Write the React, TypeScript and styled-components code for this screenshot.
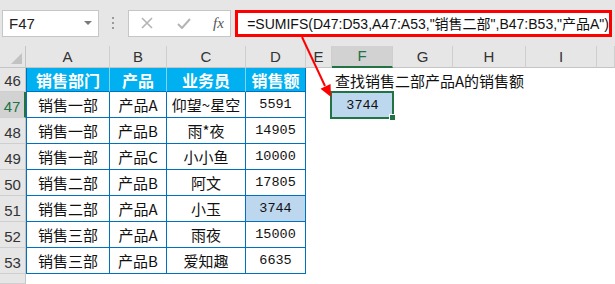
import styled, { createGlobalStyle } from "styled-components"

const Global = createGlobalStyle`
  html, body {
    margin: 0;
    padding: 0;
    background: #ffffff;
  }
  body {
    font-family: "Liberation Sans", "Noto Sans CJK SC", sans-serif;
  }
`

const BLUE = "#0070c0"
const GREEN = "#217346"

const Style = {
  Page: styled.div`
    position: relative;
    width: 615px;
    height: 284px;
    overflow: hidden;
    background: #ffffff;
  `,
  Toolbar: styled.div`
    height: 46px;
    background: #e6e6e6;
    display: flex;
    align-items: center;
    padding-left: 2px;
    box-sizing: border-box;
  `,
  NameBox: styled.div`
    width: 101px;
    height: 27px;
    box-sizing: border-box;
    background: #ffffff;
    border: 1px solid #c6c6c6;
    display: flex;
    align-items: center;
    justify-content: space-between;
    padding: 0 6px 0 6px;
    font-size: 15px;
    color: #222;
  `,
  DropArrow: styled.span`
    width: 0;
    height: 0;
    border-left: 4px solid transparent;
    border-right: 4px solid transparent;
    border-top: 4px solid #7a7a7a;
  `,
  Grip: styled.div`
    width: 31px;
    display: flex;
    flex-direction: column;
    align-items: center;
    gap: 3px;
    span {
      width: 2px;
      height: 2px;
      background: #9a9a9a;
    }
  `,
  FxButtons: styled.div`
    width: 108px;
    height: 27px;
    box-sizing: border-box;
    background: #ffffff;
    border: 1px solid #c6c6c6;
    display: flex;
    align-items: center;
    padding-left: 12px;
    gap: 24px;
  `,
  FxLabel: styled.span`
    font-family: "Liberation Serif", serif;
    font-style: italic;
    font-size: 15px;
    color: #555;
    margin-left: -2px;
  `,
  FormulaBox: styled.div`
    flex: 1;
    margin-left: 4px;
    margin-right: 3px;
    height: 27px;
    box-sizing: border-box;
    border: 3px solid #ff0000;
    background: #ffffff;
    display: flex;
    align-items: center;
    padding-left: 9px;
    font-size: 14px;
    color: #111;
    white-space: nowrap;
  `,
  Sheet: styled.div`
    display: grid;
    grid-template-columns: 26px 84px 57px 79px 60px 26px 61px 60px 73px 71px 1fr;
    grid-template-rows: 22px 24px repeat(7, 26px) 10px;
  `,
  Corner: styled.div`
    position: relative;
    background: #e6e6e6;
    border-right: 1px solid #c4c4c4;
    border-bottom: 1px solid #c4c4c4;
    box-sizing: border-box;
    &::after {
      content: "";
      position: absolute;
      right: 3px;
      bottom: 3px;
      border-left: 11px solid transparent;
      border-bottom: 11px solid #c2c2c2;
    }
  `,
  ColHead: styled.div<{ $active?: boolean }>`
    background: ${(p) => (p.$active ? "#d2d2d2" : "#e6e6e6")};
    border-right: 1px solid #cfcfcf;
    border-bottom: ${(p) => (p.$active ? `2px solid ${GREEN}` : "1px solid #c4c4c4")};
    box-sizing: border-box;
    display: flex;
    align-items: flex-end;
    justify-content: center;
    padding-bottom: 2px;
    font-size: 15px;
    color: ${(p) => (p.$active ? GREEN : "#333")};
  `,
  RowHead: styled.div<{ $active?: boolean }>`
    background: ${(p) => (p.$active ? "#d2d2d2" : "#e6e6e6")};
    border-bottom: 1px solid #cfcfcf;
    border-right: ${(p) => (p.$active ? `2px solid ${GREEN}` : "1px solid #c4c4c4")};
    box-sizing: border-box;
    display: flex;
    align-items: flex-end;
    justify-content: center;
    padding-bottom: 1px;
    font-size: 15px;
    line-height: 18px;
    color: ${(p) => (p.$active ? GREEN : "#333")};
  `,
  HeadCell: styled.div<{ $first?: boolean; $last?: boolean }>`
    background: #00b0f0;
    color: #ffffff;
    font-family: "Noto Sans CJK SC", sans-serif;
    font-weight: 700;
    font-size: 16px;
    display: flex;
    align-items: center;
    justify-content: center;
    box-sizing: border-box;
    border-left: ${(p) => (p.$first ? `1px solid ${BLUE}` : "none")};
    border-right: 1px solid ${(p) => (p.$last ? BLUE : "#7fd3f5")};
    border-bottom: 1px solid ${BLUE};
  `,
  BodyCell: styled.div<{ $first?: boolean; $fill?: string }>`
    background: ${(p) => p.$fill || "#ffffff"};
    color: #111;
    font-family: "Noto Sans CJK SC", sans-serif;
    font-size: 15px;
    display: flex;
    align-items: center;
    justify-content: center;
    box-sizing: border-box;
    border-left: ${(p) => (p.$first ? `1px solid ${BLUE}` : "none")};
    border-right: 1px solid ${BLUE};
    border-bottom: 1px solid ${BLUE};
  `,
  Num: styled.span`
    font-family: "Liberation Mono", monospace;
    font-size: 13.5px;
  `,
  Blank: styled.div<{ $fill?: string }>`
    position: relative;
    background: ${(p) => p.$fill || "transparent"};
    display: flex;
    align-items: center;
    justify-content: center;
    color: #111;
  `,
  Note: styled.div`
    position: relative;
    z-index: 1;
    display: flex;
    align-items: center;
    padding-left: 3px;
    white-space: nowrap;
    font-family: "Noto Sans CJK SC", sans-serif;
    font-size: 15px;
    color: #111;
  `,
  Selection: styled.div`
    position: absolute;
    left: -2px;
    top: -1px;
    right: -1px;
    bottom: -1px;
    border: 2px solid ${GREEN};
    pointer-events: none;
  `,
  Handle: styled.div`
    position: absolute;
    right: -4px;
    bottom: -4px;
    width: 5px;
    height: 5px;
    background: ${GREEN};
    border: 1px solid #ffffff;
  `,
  Arrow: styled.svg`
    position: absolute;
    left: 0;
    top: 0;
    pointer-events: none;
  `,
}

const COLS = ["A", "B", "C", "D", "E", "F", "G", "H", "I", ""]
const HEAD = ["销售部门", "产品", "业务员", "销售额"]
const ROWS = [
  ["销售一部", "产品A", "仰望~星空", "5591"],
  ["销售一部", "产品B", "雨*夜", "14905"],
  ["销售一部", "产品C", "小小鱼", "10000"],
  ["销售二部", "产品B", "阿文", "17805"],
  ["销售二部", "产品A", "小玉", "3744"],
  ["销售三部", "产品A", "雨夜", "15000"],
  ["销售三部", "产品B", "爱知趣", "6635"],
]

function XIcon() {
  return (
    <svg width="12" height="12" viewBox="0 0 12 12">
      <path d="M1 1 L11 11 M11 1 L1 11" stroke="#b4b4b4" strokeWidth="1.6" fill="none" />
    </svg>
  )
}

function CheckIcon() {
  return (
    <svg width="14" height="11" viewBox="0 0 14 11">
      <path d="M1 6 L5 10 L13 1" stroke="#b4b4b4" strokeWidth="2" fill="none" />
    </svg>
  )
}

export default function App() {
  return (
    <Style.Page>
      <Global />
      <Style.Toolbar>
        <Style.NameBox>
          F47
          <Style.DropArrow />
        </Style.NameBox>
        <Style.Grip>
          <span />
          <span />
          <span />
        </Style.Grip>
        <Style.FxButtons>
          <XIcon />
          <CheckIcon />
          <Style.FxLabel>fx</Style.FxLabel>
        </Style.FxButtons>
        <Style.FormulaBox>=SUMIFS(D47:D53,A47:A53,"销售二部",B47:B53,"产品A")</Style.FormulaBox>
      </Style.Toolbar>

      <Style.Sheet>
        <Style.Corner />
        {COLS.map((c, i) => (
          <Style.ColHead key={i} $active={c === "F"}>
            {c}
          </Style.ColHead>
        ))}

        <Style.RowHead>46</Style.RowHead>
        {HEAD.map((h, i) => (
          <Style.HeadCell key={h} $first={i === 0} $last={i === 3}>
            {h}
          </Style.HeadCell>
        ))}
        <Style.Blank />
        <Style.Note>查找销售二部产品A的销售额</Style.Note>
        <Style.Blank />
        <Style.Blank />
        <Style.Blank />
        <Style.Blank />

        {ROWS.map((r, ri) => {
          const rowNo = 47 + ri
          return [
            <Style.RowHead key={`h${ri}`} $active={rowNo === 47}>
              {rowNo}
            </Style.RowHead>,
            ...r.map((v, ci) => (
              <Style.BodyCell
                key={`c${ri}-${ci}`}
                $first={ci === 0}
                $fill={rowNo === 51 && ci === 3 ? "#bdd7ee" : undefined}
              >
                {ci === 3 ? <Style.Num>{v}</Style.Num> : v}
              </Style.BodyCell>
            )),
            <Style.Blank key={`e${ri}`} />,
            rowNo === 47 ? (
              <Style.Blank key={`f${ri}`} $fill="#bdd7ee">
                <Style.Num>3744</Style.Num>
                <Style.Selection>
                  <Style.Handle />
                </Style.Selection>
              </Style.Blank>
            ) : (
              <Style.Blank key={`f${ri}`} />
            ),
            <Style.Blank key={`g${ri}`} />,
            <Style.Blank key={`hh${ri}`} />,
            <Style.Blank key={`i${ri}`} />,
            <Style.Blank key={`j${ri}`} />,
          ]
        })}

        <Style.RowHead />
      </Style.Sheet>

      <Style.Arrow width="615" height="284">
        <line x1="302" y1="37" x2="325" y2="86" stroke="#ff0000" strokeWidth="2" />
        <polygon points="331,97 320.5,88.8 330.5,84" fill="#ff0000" />
      </Style.Arrow>
    </Style.Page>
  )
}
